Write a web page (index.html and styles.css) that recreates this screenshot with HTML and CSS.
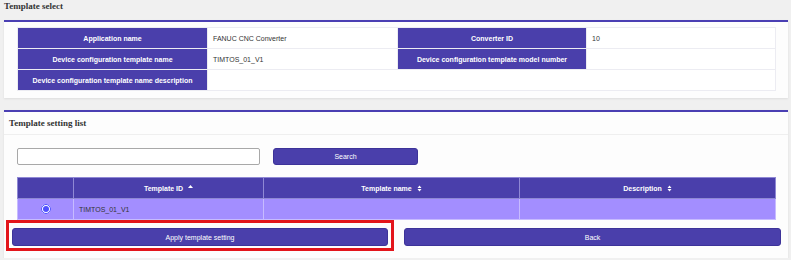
FILE: index.html
```html
<!DOCTYPE html>
<html lang="en">
<head>
    <meta charset="UTF-8">
    <title>Template select</title>
    <link rel="stylesheet" href="styles.css">
</head>
<body>
    <h2 class="page-title">Template select</h2>

    <section class="panel">
        <table class="info-table">
            <colgroup>
                <col style="width: 190px">
                <col style="width: 190px">
                <col style="width: 189px">
                <col style="width: 189px">
            </colgroup>
            <tr>
                <th>Application name</th>
                <td>FANUC CNC Converter</td>
                <th>Converter ID</th>
                <td>10</td>
            </tr>
            <tr>
                <th>Device configuration template name</th>
                <td>TIMTOS_01_V1</td>
                <th>Device configuration template model number</th>
                <td></td>
            </tr>
            <tr>
                <th>Device configuration template name description</th>
                <td colspan="3" class="blank"></td>
            </tr>
        </table>
    </section>

    <section class="panel panel-list">
        <div class="panel-header">Template setting list</div>
        <div class="panel-body">
            <div class="search-row">
                <input type="text" class="search-input">
                <button type="button" class="btn btn-search">Search</button>
            </div>

            <table class="list-table">
                <colgroup>
                    <col style="width: 56px">
                    <col style="width: 190px">
                    <col style="width: 256px">
                    <col style="width: 256px">
                </colgroup>
                <thead>
                    <tr>
                        <th></th>
                        <th>Template ID
                            <svg class="sort" width="5" height="7" viewBox="0 0 5 7"><path d="M0 3L2.5 0L5 3Z" fill="#fff"/></svg>
                        </th>
                        <th>Template name
                            <svg class="sort" width="5" height="7" viewBox="0 0 5 7"><path d="M0.5 3L2.5 0.5L4.5 3Z M0.5 4L2.5 6.5L4.5 4Z" fill="#fff"/></svg>
                        </th>
                        <th>Description
                            <svg class="sort" width="5" height="7" viewBox="0 0 5 7"><path d="M0.5 3L2.5 0.5L4.5 3Z M0.5 4L2.5 6.5L4.5 4Z" fill="#fff"/></svg>
                        </th>
                    </tr>
                </thead>
                <tbody>
                    <tr class="selected">
                        <td class="radio-cell"><input type="radio" name="template" checked></td>
                        <td>TIMTOS_01_V1</td>
                        <td></td>
                        <td></td>
                    </tr>
                </tbody>
            </table>

            <div class="actions">
                <div class="highlight">
                    <button type="button" class="btn btn-apply">Apply template setting</button>
                </div>
                <button type="button" class="btn btn-back">Back</button>
            </div>
        </div>
    </section>
</body>
</html>
```

FILE: styles.css
```css
* {
    margin: 0;
    padding: 0;
    box-sizing: border-box;
}

body {
    font-family: 'Liberation Sans', Arial, sans-serif;
    font-size: 7px;
    color: #333;
    background: #f0f0f0;
    padding: 0 3px 0 4px;
}

/* Titles */
.page-title {
    font-family: 'Liberation Serif', 'Times New Roman', serif;
    font-size: 9px;
    font-weight: bold;
    color: #333;
    line-height: 13px;
    margin-bottom: 7px;
}

/* Panels */
.panel {
    background: #fdfdfd;
    border-top: 2px solid #4a3fb3;
    box-shadow: 0 1px 2px rgba(0, 0, 0, 0.08);
    padding: 5px 13px 7px;
}

.panel-list {
    margin-top: 12px;
    padding: 0;
}

.panel-header {
    font-family: 'Liberation Serif', 'Times New Roman', serif;
    font-size: 9px;
    font-weight: bold;
    color: #333;
    line-height: 22px;
    padding-left: 5px;
    border-bottom: 1px solid #efefef;
}

.panel-body {
    padding: 13px 13px 7px;
}

/* Info table */
table {
    border-collapse: collapse;
    table-layout: fixed;
    width: 758px;
}

.info-table th,
.info-table td {
    height: 21px;
    border: 1px solid #ececf2;
}

.info-table th {
    background: #4a3fab;
    color: #fff;
    font-weight: bold;
    text-align: center;
}

.info-table td {
    background: #fff;
    padding-left: 5px;
    color: #333;
}

/* Search */
.search-row {
    display: flex;
    align-items: center;
}

.search-input {
    width: 243px;
    height: 17px;
    border: 1px solid #a8a8a8;
    border-radius: 2px;
    background: #fff;
}

.btn {
    font-family: 'Liberation Sans', Arial, sans-serif;
    font-size: 7px;
    color: #fff;
    background: #4a3fab;
    border: 1px solid #3d3399;
    border-radius: 3px;
    cursor: pointer;
}

.btn-search {
    width: 145px;
    height: 17px;
    margin-left: 13px;
}

/* List table */
.list-table {
    margin-top: 12px;
}

.list-table th {
    height: 21px;
    background: #4a3fab;
    color: #fff;
    font-weight: bold;
    text-align: center;
    border: 1px solid #8f88d4;
}

.list-table th .sort {
    margin-left: 3px;
    vertical-align: -1px;
}

.list-table td {
    height: 21px;
    padding-left: 5px;
    border: 1px solid #c7bbff;
}

.list-table tr.selected td {
    background: #a38eff;
    color: #333;
}

.list-table td.radio-cell {
    padding: 0;
    text-align: center;
}

.radio-cell input {
    width: 10px;
    height: 10px;
    accent-color: #4f4fff;
    vertical-align: middle;
}

/* Actions */
.actions {
    display: flex;
    align-items: flex-start;
    margin: 0 -6px 0 -11px;
}

.highlight {
    flex: 0 0 388px;
    border: 3px solid #e3151b;
    padding: 5px 3px 2px;
}

.btn-apply {
    display: block;
    width: 100%;
    height: 18px;
}

.btn-back {
    flex: 1;
    height: 18px;
    margin: 8px 0 0 10px;
}
```
